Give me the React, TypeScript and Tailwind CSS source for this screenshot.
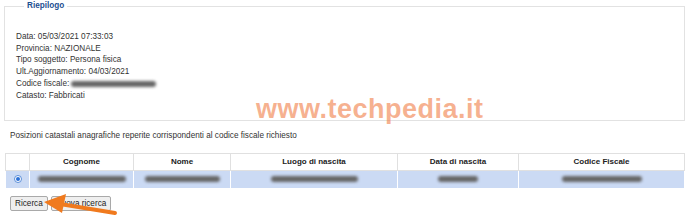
import React from "react";

const rows = [
  { label: "Data:", value: "05/03/2021 07:33:03" },
  { label: "Provincia:", value: "NAZIONALE" },
  { label: "Tipo soggetto:", value: "Persona fisica" },
  { label: "Ult.Aggiornamento:", value: "04/03/2021" },
];

function Blur({ w }: { w: number }) {
  return <span className="inline-block h-[6px] rounded-full bg-[#666] blur-[1.5px] align-middle" style={{ width: w }} />;
}

const cols = [
  { name: "", w: 24, bar: 0 },
  { name: "Cognome", w: 104, bar: 88 },
  { name: "Nome", w: 97, bar: 75 },
  { name: "Luogo di nascita", w: 167, bar: 87 },
  { name: "Data di nascita", w: 121, bar: 40 },
  { name: "Codice Fiscale", w: 166, bar: 80 },
];

export default function App() {
  return (
    <div className="relative w-[700px] h-[224px] overflow-hidden bg-white font-['Liberation_Sans',Arial,sans-serif] text-[8.2px] text-[#333]">
      <fieldset className="ml-[4px] w-[681px] h-[121px] border border-[#e2e2e2] px-[11px] pt-[19px]">
        <legend className="ml-[8px] px-[3px] font-bold text-[#1d4f91] leading-[12px]">Riepilogo</legend>
        <div className="leading-[11.7px]">
          {rows.map((r) => (
            <div key={r.label}>
              {r.label} {r.value}
            </div>
          ))}
          <div className="flex items-center gap-[2px]">
            Codice fiscale: <Blur w={85} />
          </div>
          <div>Catasto: Fabbricati</div>
        </div>
      </fieldset>

      <div className="ml-[10px] mt-[9px] leading-[11px]">
        Posizioni catastali anagrafiche reperite corrispondenti al codice fiscale richiesto
      </div>

      <table className="ml-[5px] mt-[12px] border-collapse table-fixed w-[679px]">
        <thead>
          <tr className="h-[17px]">
            {cols.map((c, i) => (
              <th
                key={i}
                className="border border-[#e0e0e0] bg-white p-0 text-center font-bold text-[#222] text-[8px]"
                style={{ width: c.w }}
              >
                {c.name}
              </th>
            ))}
          </tr>
        </thead>
        <tbody>
          <tr className="h-[17px]">
            {cols.map((c, i) => (
              <td key={i} className="border-x border-white bg-[#cbdaf4] p-0 text-center">
                {i === 0 ? (
                  <span className="inline-flex h-[8px] w-[8px] items-center justify-center rounded-full border border-[#5b8ed8] bg-white align-middle">
                    <span className="h-[4px] w-[4px] rounded-full bg-[#2a6fd6]" />
                  </span>
                ) : (
                  <Blur w={c.bar} />
                )}
              </td>
            ))}
          </tr>
        </tbody>
      </table>

      <div className="ml-[10px] mt-[8px] flex gap-[3px]">
        <button className="h-[15px] rounded-[2px] border border-[#a9a9a9] bg-[#efefef] px-[4px] text-[8.2px] leading-[13px] text-[#222]">
          Ricerca
        </button>
        <button className="h-[15px] rounded-[2px] border border-[#a9a9a9] bg-[#efefef] px-[4px] text-[8.2px] leading-[13px] text-[#222]">
          Nuova ricerca
        </button>
      </div>

      <div className="absolute left-[256px] top-[94px] font-['Liberation_Sans',Arial,sans-serif] text-[27px] font-bold leading-[30px] tracking-[0.5px] text-[#f07d45]/60">
        www.techpedia.it
      </div>

      <svg className="absolute left-0 top-0" width="700" height="224" viewBox="0 0 700 224">
        <path d="M115 213 L60 204" stroke="#f07a1e" strokeWidth="4" strokeLinecap="round" fill="none" />
        <path d="M44 202 L66 194 L62 213 Z" fill="#f07a1e" />
      </svg>
    </div>
  );
}
